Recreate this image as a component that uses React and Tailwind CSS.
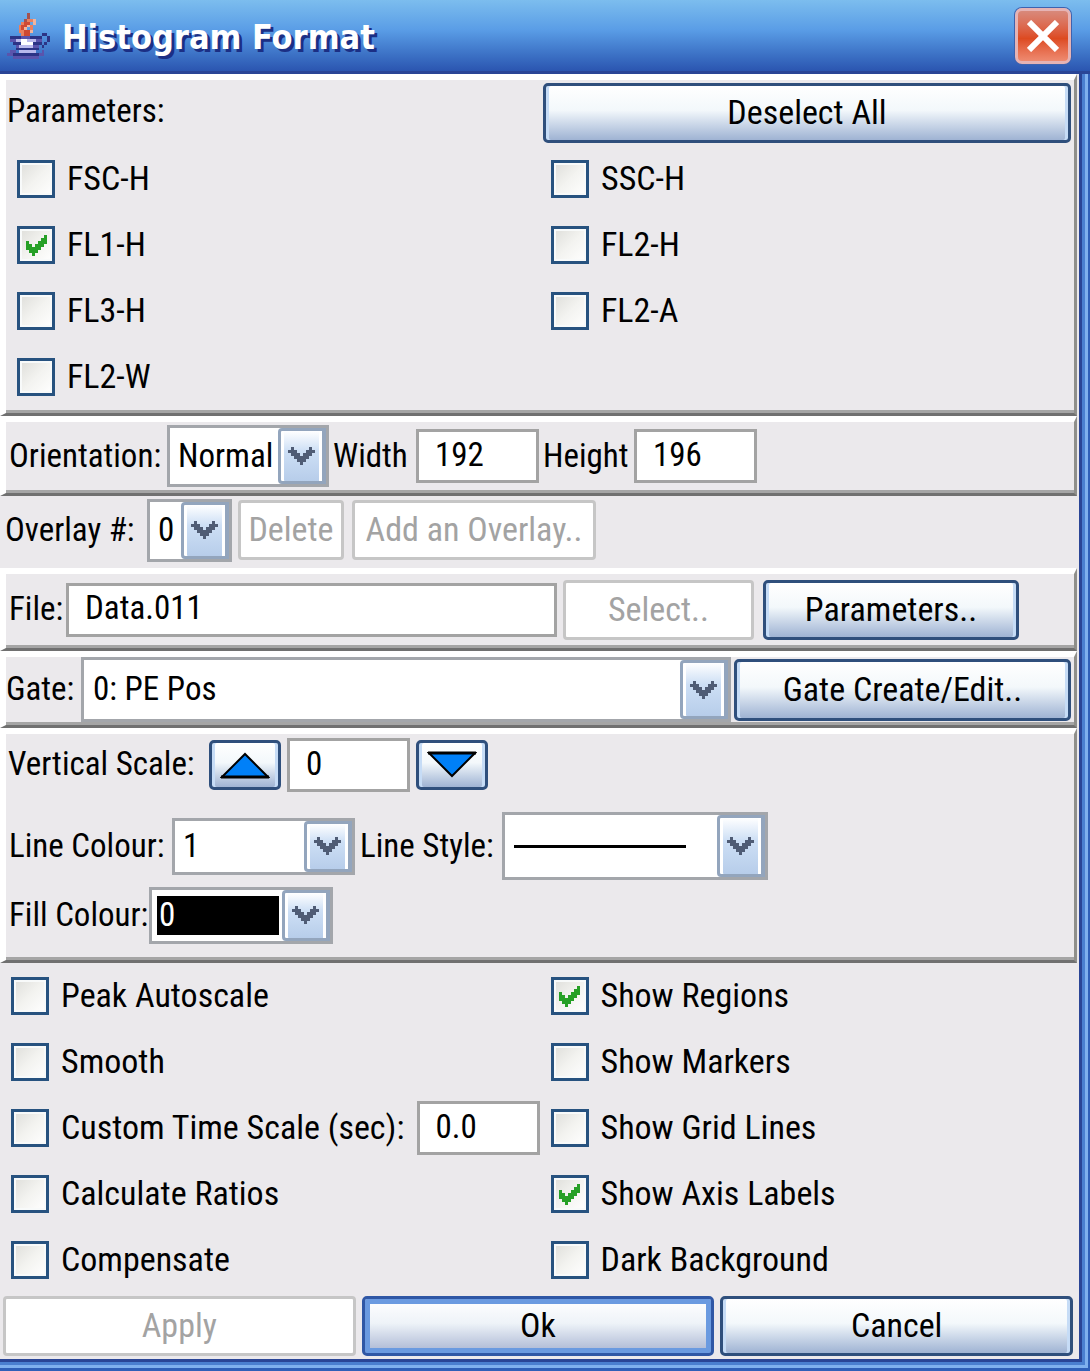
const PANEL =
  "border-t-6 border-l-6 border-r-3 border-b-3 border-t-white border-l-white border-r-[#8f8f8b] border-b-[#707070] shadow-[inset_0_-3px_0_#a5a5a5]";

const XP_FACE =
  "rounded-[5px] border-[3px] border-[#2f4f7c] bg-linear-to-b from-white via-[#f3f8fb] via-45% to-[#9fb3d3] shadow-[inset_3px_0_0_#c6dcf6,inset_-3px_0_0_#c6dcf6]";

function Label({ htmlFor, className = "", children }) {
  return (
    <label htmlFor={htmlFor} className={`shrink-0 whitespace-nowrap leading-10 ${className}`}>
      {children}
    </label>
  );
}

function Button({ className = "", primary, disabled, children }) {
  const look = disabled
    ? "rounded-[4px] border-[3px] border-[#c6c6c6] bg-white text-[#a3a3a3]"
    : primary
      ? "rounded-[5px] border-[3px] border-[#2f57a5] bg-linear-to-b from-white via-[#eef3f8] via-45% to-[#a9b5d2] shadow-[inset_0_0_0_5px_#6a9ae0]"
      : XP_FACE;
  return (
    <button
      type="button"
      disabled={disabled}
      className={`pb-0.5 text-[34px] leading-10 whitespace-nowrap ${look} ${className}`}
    >
      {children}
    </button>
  );
}

function TextField({ id, value, label, className = "" }) {
  return (
    <input
      id={id}
      aria-label={label}
      defaultValue={value}
      className={`h-[54px] min-w-0 rounded-none border-[3px] border-[#a3a3a3] bg-white pb-1 pl-4 outline-none ${className}`}
    />
  );
}

function Chevron() {
  return (
    <svg viewBox="0 0 9 6" className="h-[18px] w-[27px]" shapeRendering="crispEdges" fill="#4f5c75" aria-hidden="true">
      <path d="M1 0h1v1h1v1h1v1h1v-1h1v-1h1v-1h1v1h1v1h-1v1h-1v1h-1v1h-1v1h-1v-1h-1v-1h-1v-1h-1v-1h-1v-1h1z" />
    </svg>
  );
}

function Combo({ id, options, label, className = "", selectClass = "pl-2", children }) {
  return (
    <span className={`relative flex border-[3px] border-[#a3a6ab] bg-white ${className}`}>
      <select
        id={id}
        aria-label={label}
        className={`min-w-0 flex-1 appearance-none rounded-none leading-9 outline-none ${selectClass}`}
      >
        {options.map((o) => (
          <option key={o}>{o}</option>
        ))}
      </select>
      {children}
      <span className="pointer-events-none absolute inset-y-0 right-0 flex w-[48px] items-center justify-center rounded-l-[4px] border-3 border-r-4 border-[#93a5bd] bg-linear-to-b from-white via-[#cddff5] via-40% to-[#b7cdea] shadow-[inset_3px_0_0_#fff,inset_-3px_0_0_#fff]">
        <Chevron />
      </span>
    </span>
  );
}

function Check({ id, label, checked, className = "" }) {
  return (
    <div className={`flex h-[66px] items-center gap-3 ${className}`}>
      <span className="relative grid size-[38px] shrink-0 place-items-center">
        <input
          id={id}
          type="checkbox"
          defaultChecked={checked}
          className="peer size-[38px] appearance-none rounded-none border-[3px] border-[#27527f] bg-linear-to-br from-[#dededa] via-[#f3f3f0] to-white shadow-[inset_0_0_0_2px_#f8fafa]"
        />
        <svg
          viewBox="0 0 7 7"
          className="pointer-events-none absolute size-[21px] opacity-0 peer-checked:opacity-100"
          shapeRendering="crispEdges"
          fill="#26a026"
          aria-hidden="true"
        >
          <path d="M0 2h1v1h1v1h1v-1h1v-1h1v-1h1v-1h1v3h-1v1h-1v1h-1v1h-1v1h-1v-1h-1v-1h-1z" />
        </svg>
      </span>
      <Label htmlFor={id} className="pb-0.5 text-[34px]">
        {label}
      </Label>
    </div>
  );
}

function JavaIcon() {
  return (
    <svg viewBox="0 0 16 16" className="size-[46px]" shapeRendering="crispEdges" aria-hidden="true">
      <path fill="#a5524f" d="M7 0h1v2h-1zM6 2h1v1h-1z" />
      <path fill="#e9805f" d="M7 2h2v1h-2zM5 3h1v1h-1zM8 4h1v2h-1zM4 4h1v3h-1zM5 6h1v2h-1z" />
      <path fill="#cf4a34" d="M6 3h2v1h-2zM5 4h2v2h-2zM6 6h2v2h-2z" />
      <path fill="#f1b49d" d="M7 4h1v1h-1zM9 2h1v2h-1zM6 5h1v1h-1zM8 6h1v1h-1z" />
      <path fill="#b9b9ec" d="M3 9h7v1h-7zM4 11h5v1h-5zM4 13h6v1h-6z" />
      <path
        fill="#2c3486"
        d="M1 8h4v1h-4zM8 8h4v1h-4zM2 10h3v1h-3zM9 10h3v1h-3zM3 12h8v1h-8zM2 14h9v1h-9zM12 7h2v1h-2zM14 8h1v2h-1zM13 10h1v1h-1zM12 11h1v1h-1z"
      />
      <path
        fill="#5a54ac"
        d="M1 9h2v1h-2zM10 9h2v1h-2zM3 11h1v1h-1zM9 11h2v1h-2zM0 14h2v1h-2zM11 14h2v1h-2zM2 15h9v1h-9zM1 13h2v1h-2zM12 13h1v1h-1zM5 8h3v1h-3z"
      />
      <path fill="#fff" d="M5 10h4v1h-4zM5 9h2v1h-2z" />
    </svg>
  );
}

export default function App() {
  return (
    <main className="flex min-h-screen flex-col overflow-hidden bg-[#2f5fb8] font-['Roboto_Condensed','Liberation_Sans',sans-serif] text-[33px] text-black">
      <header className="relative z-10 flex h-[74px] items-center border-b-3 border-[#2a4596] bg-linear-to-b from-[#7cbdee] from-0% via-[#5a9de6] via-42% to-[#2b55b0] pr-[19px] pl-[7px]">
        <JavaIcon />
        <h1 className="flex-1 pt-1 pl-[9px] font-['DejaVu_Sans_Condensed','Open_Sans',sans-serif] text-[34px] font-bold text-white [text-shadow:3px_3px_0_#1b2f85]">
          Histogram Format
        </h1>
        <button
          type="button"
          aria-label="Close"
          className="grid size-[56px] place-items-center rounded-[7px] border-[3px] border-[#e6b3b4] bg-linear-to-b from-[#d8897b] via-[#dd4a20] via-55% to-[#ee8a70] shadow-[0_0_0_1px_#3f62ae]"
        >
          <svg viewBox="0 0 32 32" className="size-8" stroke="#fff" strokeWidth="6" aria-hidden="true">
            <path d="M2 2L30 30M30 2L2 30" />
          </svg>
        </button>
      </header>

      <div className="mr-2 mb-[9px] flex flex-1 flex-col border-r-3 border-b-3 border-[#2a4596] bg-[#ebe9ec] shadow-[0_0_0_3px_#4a7fd0,0_0_0_6px_#7fb0ee]">
        <section className={`mr-[2px] grid grid-cols-2 pb-[3px] ${PANEL}`}>
          <h2 className="pt-[11px] pl-px leading-10">Parameters:</h2>
          <div className="flex h-[66px] items-start px-[3px] pt-[3px]">
            <Button className="h-[60px] w-full">Deselect All</Button>
          </div>
          <Check id="fsc-h" label="FSC-H" className="pl-[11px]" />
          <Check id="ssc-h" label="SSC-H" className="pl-[11px]" />
          <Check id="fl1-h" label="FL1-H" checked className="pl-[11px]" />
          <Check id="fl2-h" label="FL2-H" className="pl-[11px]" />
          <Check id="fl3-h" label="FL3-H" className="pl-[11px]" />
          <Check id="fl2-a" label="FL2-A" className="pl-[11px]" />
          <Check id="fl2-w" label="FL2-W" className="pl-[11px]" />
        </section>

        <section className={`mr-[2px] flex h-[80px] items-center pb-[3px] pl-[3px] ${PANEL}`}>
          <Label htmlFor="orientation" className="w-[158px]">Orientation:</Label>
          <Combo id="orientation" options={["Normal"]} className="h-[62px] w-[162px]" />
          <Label htmlFor="width" className="w-[87px] pl-1">Width</Label>
          <TextField id="width" value="192" className="w-[123px]" />
          <Label htmlFor="height" className="w-[95px] pl-1">Height</Label>
          <TextField id="height" value="196" className="w-[123px]" />
        </section>

        <section className="flex h-[72px] items-center pb-1 pl-[5px]">
          <Label htmlFor="overlay" className="w-[142px]">Overlay #:</Label>
          <Combo id="overlay" options={["0"]} className="h-[63px] w-[85px]" />
          <Button disabled className="ml-[6px] h-[60px] w-[106px]">Delete</Button>
          <Button disabled className="ml-2 h-[60px] w-[244px]">Add an Overlay..</Button>
        </section>

        <section className={`mr-[2px] flex h-[83px] items-center pb-[3px] pl-[3px] ${PANEL}`}>
          <Label htmlFor="file" className="w-[57px] pb-0.5">File:</Label>
          <TextField id="file" value="Data.011" className="w-[491px]" />
          <Button disabled className="ml-[6px] h-[60px] w-[191px]">Select..</Button>
          <Button className="ml-[9px] h-[60px] w-[256px]">Parameters..</Button>
        </section>

        <section className={`mr-[2px] flex h-[77px] items-center pr-[3px] pb-[3px] ${PANEL}`}>
          <Label htmlFor="gate" className="w-[75px] pb-0.5">Gate:</Label>
          <Combo id="gate" options={["0: PE Pos"]} className="h-[65px] flex-1" selectClass="pl-[9px] pb-0.5" />
          <Button className="ml-[3px] h-[62px] w-[337px]">Gate Create/Edit..</Button>
        </section>

        <section className={`mr-[2px] h-[235px] ${PANEL}`}>
          <div className="flex h-[62px] items-center gap-[6px] pl-[2px]">
            <Label htmlFor="vscale" className="w-[195px] pb-0.5">Vertical Scale:</Label>
            <button type="button" aria-label="Increase vertical scale" className={`grid h-[50px] w-[72px] place-items-center ${XP_FACE}`}>
              <svg viewBox="0 0 50 28" className="h-7 w-[50px]" fill="#0080f8" stroke="#000" strokeWidth="2" aria-hidden="true">
                <path d="M2 26L25 3L48 26Z" />
                <path d="M1 26H49" strokeWidth="3" />
              </svg>
            </button>
            <TextField id="vscale" value="0" className="w-[123px]" />
            <button type="button" aria-label="Decrease vertical scale" className={`grid h-[50px] w-[72px] place-items-center ${XP_FACE}`}>
              <svg viewBox="0 0 50 28" className="h-7 w-[50px]" fill="#0080f8" stroke="#000" strokeWidth="2" aria-hidden="true">
                <path d="M2 2L25 25L48 2Z" />
                <path d="M1 2H49" strokeWidth="3" />
              </svg>
            </button>
          </div>
          <div className="mt-4 flex h-[68px] items-center pl-[3px]">
            <Label htmlFor="line-colour" className="w-[163px]">Line Colour:</Label>
            <Combo id="line-colour" options={["1"]} className="h-[57px] w-[183px]" />
            <Label htmlFor="line-style" className="w-[147px] pl-[5px]">Line Style:</Label>
            <Combo id="line-style" options={[""]} className="h-[68px] w-[266px]">
              <span className="pointer-events-none absolute inset-x-[9px] top-[30px] mr-[70px] h-[3px] bg-black" />
            </Combo>
          </div>
          <div className="flex h-[70px] items-center pl-[3px]">
            <Label htmlFor="fill-colour" className="w-[140px]">Fill Colour:</Label>
            <Combo
              id="fill-colour"
              options={["0"]}
              className="h-[57px] w-[184px]"
              selectClass="my-[6px] ml-[5px] mr-[51px] bg-black pl-[2px] text-white"
            />
          </div>
        </section>

        <section className="grid grid-cols-2">
          <Check id="peak" label="Peak Autoscale" className="pl-[11px]" />
          <Check id="regions" label="Show Regions" checked className="pl-[11px]" />
          <Check id="smooth" label="Smooth" className="pl-[11px]" />
          <Check id="markers" label="Show Markers" className="pl-[11px]" />
          <div className="flex items-center justify-between">
            <Check id="custom-time" label="Custom Time Scale (sec):" className="pl-[11px]" />
            <TextField label="Custom time scale in seconds" value="0.0" className="w-[123px]" />
          </div>
          <Check id="grid-lines" label="Show Grid Lines" className="pl-[11px]" />
          <Check id="ratios" label="Calculate Ratios" className="pl-[11px]" />
          <Check id="axis-labels" label="Show Axis Labels" checked className="pl-[11px]" />
          <Check id="compensate" label="Compensate" className="pl-[11px]" />
          <Check id="dark-bg" label="Dark Background" className="pl-[11px]" />
        </section>

        <footer className="grid grid-cols-3 gap-[6px] pt-[3px] pr-[6px] pb-[3px] pl-[3px]">
          <Button disabled className="h-[60px]">Apply</Button>
          <Button primary className="h-[60px]">Ok</Button>
          <Button className="h-[60px]">Cancel</Button>
        </footer>
      </div>
    </main>
  );
}
